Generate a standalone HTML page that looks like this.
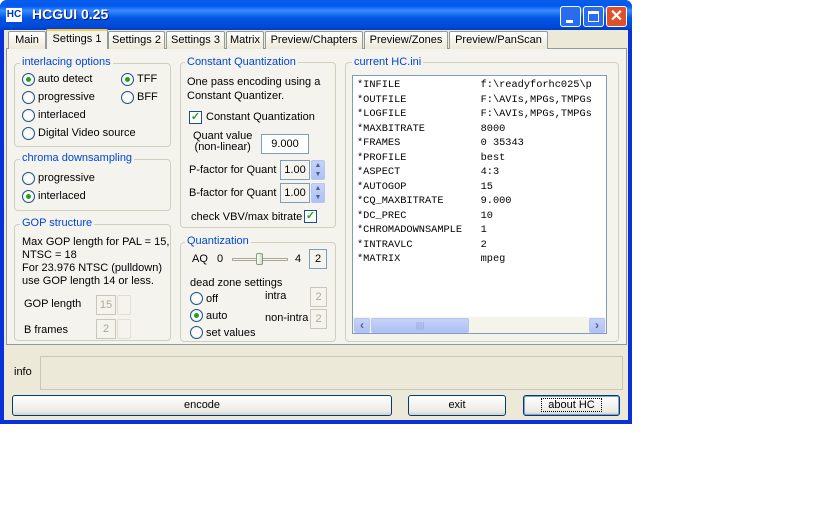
<!DOCTYPE html><html><head><style>
*{margin:0;padding:0;box-sizing:border-box}
body{width:840px;height:525px;background:#fff;font-family:"Liberation Sans",sans-serif;font-size:11px;color:#000;position:relative;overflow:hidden}
.a{position:absolute}
.win{left:0;top:0;width:632px;height:424px;background:#0831d9;border-radius:7px 7px 0 0}
.title{left:0;top:0;width:632px;height:30px;border-radius:7px 7px 0 0;background:linear-gradient(#0a5de8,#0058ee 20%,#3a8cff 35%,#0055e5 60%,#0048d8 90%,#003cc0)}
.body{left:4px;top:30px;width:624px;height:390px;background:#ece9d8}
.tab{top:31px;height:18px;border:1px solid #919b9c;border-bottom:none;background:linear-gradient(#fff,#ece9d8);text-align:center;line-height:17px;font-size:11px;border-radius:2px 2px 0 0}
.panel{left:6px;top:48px;width:621px;height:297px;border:1px solid #919b9c;background:#f4f3ee}
.grp{border:1px solid #d0d0bf;border-radius:4px}
.gl{background:#f4f3ee;color:#0046d5;padding:0 2px;font-size:11px}
.rb{width:13px;height:13px;border:1px solid #1c5180;border-radius:50%;background:radial-gradient(#fff 40%,#dcdcd6)}
.rb.on::after{content:"";position:absolute;left:3px;top:3px;width:5px;height:5px;border-radius:50%;background:#21a121}
.box{border:1px solid #7f9db9;background:#fff}
.dis{border:1px solid #c9c7ba;color:#aca899;text-align:center}
.spin{width:14px;height:18px;background:linear-gradient(#c6d3f7,#aec0f5);border:1px solid #b6c6f3;border-radius:2px;color:#4d6185;font-size:7px;text-align:center;line-height:9px}
.btn{border:1px solid #003c74;border-radius:3px;background:linear-gradient(#fff,#ecebe6 80%,#d6d0c5);text-align:center;line-height:18px}
pre{font-family:"Liberation Mono",monospace;font-size:10.3px;line-height:14.5px}
</style></head><body>
<div class="a win"></div>
<div class="a title"></div>
<div class="a" style="left:6px;top:8px;width:16px;height:14px;background:#fff;color:#0038c0;font-weight:bold;font-size:10px;line-height:14px;text-align:center">HC</div>
<div class="a" style="left:32px;top:6px;color:#fff;font-weight:bold;font-size:14px;text-shadow:1px 1px #0a1e80">HCGUI 0.25</div>
<div class="a" style="left:560px;top:6px;width:21px;height:21px;border:1px solid #fff;border-radius:3px;background:#2a6cf0"><div class="a" style="left:5px;top:13px;width:7px;height:3px;background:#fff"></div></div>
<div class="a" style="left:583px;top:6px;width:21px;height:21px;border:1px solid #fff;border-radius:3px;background:#2a6cf0"><div class="a" style="left:4px;top:4px;width:11px;height:11px;border:1px solid #fff;border-top-width:3px"></div></div>
<div class="a" style="left:606px;top:6px;width:21px;height:21px;border:1px solid #fff;border-radius:3px;background:#e0502a;color:#fff;font-weight:bold;font-size:16px;line-height:19px;text-align:center">✕</div>
<div class="a body"></div>
<div class="a panel"></div>
<div class="a tab" style="left:8px;width:38px">Main</div>
<div class="a tab" style="left:46px;top:29px;height:20px;width:62px;background:#f4f3ee;border-top:2px solid #ffc83c;z-index:2">Settings 1</div>
<div class="a tab" style="left:108px;width:57px">Settings 2</div>
<div class="a tab" style="left:166px;width:59px">Settings 3</div>
<div class="a tab" style="left:226px;width:38px">Matrix</div>
<div class="a tab" style="left:265px;width:98px">Preview/Chapters</div>
<div class="a tab" style="left:364px;width:84px">Preview/Zones</div>
<div class="a tab" style="left:449px;width:99px">Preview/PanScan</div>

<div class="a grp" style="left:14px;top:63px;width:157px;height:84px"></div>
<div class="a gl" style="left:20px;top:56px">interlacing options</div>
<div class="a rb on" style="left:22px;top:73px"></div><div class="a" style="left:38px;top:73px">auto detect</div>
<div class="a rb on" style="left:121px;top:73px"></div><div class="a" style="left:137px;top:73px">TFF</div>
<div class="a rb" style="left:22px;top:91px"></div><div class="a" style="left:38px;top:91px">progressive</div>
<div class="a rb" style="left:121px;top:91px"></div><div class="a" style="left:137px;top:91px">BFF</div>
<div class="a rb" style="left:22px;top:109px"></div><div class="a" style="left:38px;top:109px">interlaced</div>
<div class="a rb" style="left:22px;top:127px"></div><div class="a" style="left:38px;top:127px">Digital Video source</div>

<div class="a grp" style="left:14px;top:159px;width:157px;height:52px"></div>
<div class="a gl" style="left:20px;top:152px">chroma downsampling</div>
<div class="a rb" style="left:22px;top:172px"></div><div class="a" style="left:38px;top:172px">progressive</div>
<div class="a rb on" style="left:22px;top:190px"></div><div class="a" style="left:38px;top:190px">interlaced</div>

<div class="a grp" style="left:14px;top:224px;width:157px;height:117px"></div>
<div class="a gl" style="left:20px;top:217px">GOP structure</div>
<div class="a" style="left:22px;top:236px;line-height:13px;width:150px">Max GOP length for PAL = 15, NTSC = 18<br>For 23.976 NTSC (pulldown) use GOP length 14 or less.</div>
<div class="a" style="left:24px;top:298px">GOP length</div>
<div class="a dis" style="left:96px;top:295px;width:20px;height:20px;line-height:18px">15</div>
<div class="a" style="left:117px;top:295px;width:14px;height:20px;border:1px solid #e0ded4;border-radius:2px"></div>
<div class="a" style="left:24px;top:324px">B frames</div>
<div class="a dis" style="left:96px;top:319px;width:20px;height:20px;line-height:18px">2</div>
<div class="a" style="left:117px;top:319px;width:14px;height:20px;border:1px solid #e0ded4;border-radius:2px"></div>

<div class="a grp" style="left:180px;top:62px;width:156px;height:166px"></div>
<div class="a gl" style="left:185px;top:56px">Constant Quantization</div>
<div class="a" style="left:187px;top:75px;line-height:14px">One pass encoding using a<br>Constant Quantizer.</div>
<div class="a box" style="left:189px;top:111px;width:13px;height:13px;border-color:#1c5180;color:#21a121;font-size:11px;line-height:11px;text-align:center;font-weight:bold">✓</div>
<div class="a" style="left:206px;top:111px">Constant Quantization</div>
<div class="a" style="left:193px;top:131px;line-height:11px;text-align:center">Quant value<br>(non-linear)</div>
<div class="a box" style="left:261px;top:134px;width:48px;height:20px;line-height:18px;text-align:center">9.000</div>
<div class="a" style="left:189px;top:164px">P-factor for Quant</div>
<div class="a box" style="left:280px;top:160px;width:30px;height:20px;line-height:18px;text-align:center;background:#f4f3ee">1.00</div>
<div class="a spin" style="left:311px;top:160px;height:20px">▲<br>▼</div>
<div class="a" style="left:189px;top:187px">B-factor for Quant</div>
<div class="a box" style="left:280px;top:183px;width:30px;height:20px;line-height:18px;text-align:center;background:#f4f3ee">1.00</div>
<div class="a spin" style="left:311px;top:183px;height:20px">▲<br>▼</div>
<div class="a" style="left:191px;top:211px">check VBV/max bitrate</div>
<div class="a box" style="left:304px;top:210px;width:13px;height:13px;border-color:#1c5180;color:#21a121;font-size:11px;line-height:11px;text-align:center;font-weight:bold">✓</div>

<div class="a grp" style="left:180px;top:242px;width:156px;height:100px"></div>
<div class="a gl" style="left:185px;top:235px">Quantization</div>
<div class="a" style="left:192px;top:253px">AQ&nbsp;&nbsp;&nbsp;0</div>
<div class="a" style="left:232px;top:258px;width:56px;height:3px;border:1px solid #aca899;background:#f4f3ee"></div>
<div class="a" style="left:256px;top:253px;width:7px;height:12px;background:linear-gradient(90deg,#fff,#c6e0c0);border:1px solid #8c9a80;border-radius:2px"></div>
<div class="a" style="left:295px;top:253px">4</div>
<div class="a box" style="left:309px;top:249px;width:18px;height:20px;line-height:18px;text-align:center;background:#f4f3ee">2</div>
<div class="a" style="left:190px;top:277px">dead zone settings</div>
<div class="a rb" style="left:190px;top:292px"></div><div class="a" style="left:206px;top:293px">off</div>
<div class="a" style="left:265px;top:290px">intra</div>
<div class="a dis" style="left:310px;top:287px;width:17px;height:20px;line-height:18px">2</div>
<div class="a rb on" style="left:190px;top:309px"></div><div class="a" style="left:206px;top:310px">auto</div>
<div class="a" style="left:265px;top:312px">non-intra</div>
<div class="a dis" style="left:310px;top:309px;width:17px;height:20px;line-height:18px">2</div>
<div class="a rb" style="left:190px;top:326px"></div><div class="a" style="left:206px;top:327px">set values</div>

<div class="a grp" style="left:345px;top:62px;width:274px;height:280px"></div>
<div class="a gl" style="left:352px;top:56px">current HC.ini</div>
<div class="a box" style="left:352px;top:75px;width:255px;height:259px;overflow:hidden">
<pre style="position:absolute;left:4px;top:2px;white-space:pre">*INFILE             f:\readyforhc025\p
*OUTFILE            F:\AVIs,MPGs,TMPGs
*LOGFILE            F:\AVIs,MPGs,TMPGs
*MAXBITRATE         8000
*FRAMES             0 35343
*PROFILE            best
*ASPECT             4:3
*AUTOGOP            15
*CQ_MAXBITRATE      9.000
*DC_PREC            10
*CHROMADOWNSAMPLE   1
*INTRAVLC           2
*MATRIX             mpeg</pre>
<div class="a" style="left:0;top:241px;width:253px;height:17px;background:#f5f4ea"></div>
<div class="a spin" style="left:1px;top:242px;width:16px;height:15px;font-size:12px;line-height:13px;font-weight:bold">‹</div>
<div class="a spin" style="left:18px;top:242px;width:98px;height:15px;line-height:13px;color:#8ca0d0;font-size:8px">||||</div>
<div class="a spin" style="left:236px;top:242px;width:16px;height:15px;font-size:12px;line-height:13px;font-weight:bold">›</div>
</div>

<div class="a" style="left:14px;top:366px">info</div>
<div class="a" style="left:40px;top:356px;width:583px;height:34px;border:1px solid #c9c7ba"></div>
<div class="a btn" style="left:12px;top:395px;width:380px;height:21px">encode</div>
<div class="a btn" style="left:408px;top:395px;width:98px;height:21px">exit</div>
<div class="a btn" style="left:523px;top:395px;width:97px;height:21px;box-shadow:inset 0 0 0 1px #7ca0e0"><span style="outline:1px dotted #000;padding:0 6px">about HC</span></div>
</body></html>
